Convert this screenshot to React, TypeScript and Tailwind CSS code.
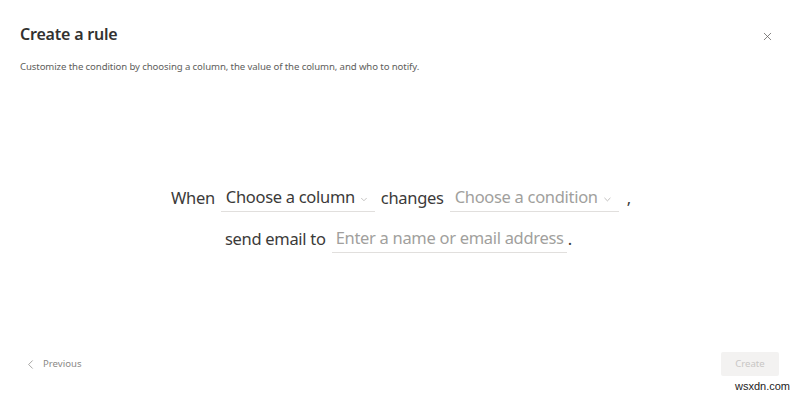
import React from 'react';
import { X, ChevronDown, ChevronLeft } from 'lucide-react';

const font = { fontFamily: '"Noto Sans", "Open Sans", sans-serif' };

const Dropdown: React.FC<{ label: string; muted?: boolean; width: string }> = ({ label, muted, width }) => (
    <div className={`flex items-center justify-between border-b border-[#e1dfdd] pl-[5px] pr-[6px] pb-[1px] whitespace-nowrap ${width}`}>
        <span className={`tracking-[-0.3px] ${muted ? 'text-[#a19f9d]' : 'text-[#3b3a39]'}`}>{label}</span>
        <ChevronDown size={11} strokeWidth={1.5} className="text-[#a19f9d] ml-1 mt-[3px]" />
    </div>
);

export default function App() {
    return (
        <div className="w-[800px] h-[396px] bg-white flex flex-col relative" style={font}>
            {/* HEADER */}
            <div className="flex items-start justify-between pl-[20px] pr-[26px] pt-[22px]">
                <div className="flex flex-col">
                    <h1 className="text-[16px] font-semibold text-[#323130] leading-[24px] tracking-[-0.2px]">Create a rule</h1>
                    <p className="text-[9.6px] text-[#605e5c] mt-[14px] tracking-[-0.1px]">
                        Customize the condition by choosing a column, the value of the column, and who to notify.
                    </p>
                </div>
                <button className="text-[#605e5c] mt-[8px]"><X size={13} strokeWidth={1.4} /></button>
            </div>

            {/* SENTENCE */}
            <div className="flex-1 flex flex-col items-center justify-center gap-[14px] text-[16.5px] text-[#3b3a39] pt-[12px] pl-[2px] whitespace-nowrap">
                <div className="flex items-center gap-[6px]">
                    <span className="tracking-[-0.3px]">When</span>
                    <Dropdown label="Choose a column" width="w-[154px]" />
                    <span className="tracking-[-0.3px]">changes</span>
                    <Dropdown label="Choose a condition" muted width="w-[169px]" />
                    <span className="ml-[2px]">,</span>
                </div>
                <div className="flex items-center gap-[6px] pr-[5px]">
                    <span className="tracking-[-0.3px]">send email to</span>
                    <div className="border-b border-[#e1dfdd] px-[4px] pb-[1px] w-[235px]">
                        <span className="text-[#a19f9d] tracking-[-0.3px]">Enter a name or email address</span>
                    </div>
                    <span className="-ml-[5px]">.</span>
                </div>
            </div>

            {/* FOOTER */}
            <div className="flex items-center justify-between pl-[23px] pr-[21px] pb-[20px]">
                <button className="flex items-center gap-[5px] text-[9.6px] text-[#8a8886]">
                    <ChevronLeft size={15} strokeWidth={1.2} />
                    Previous
                </button>
                <button className="w-[58px] h-[24px] bg-[#f3f2f1] text-[9.6px] text-[#c8c6c4] rounded-[2px]">Create</button>
            </div>

            <span className="absolute right-[10px] bottom-[2px] text-[11px] text-[#222] bg-white" style={{ fontFamily: '"Liberation Sans", sans-serif' }}>wsxdn.com</span>
        </div>
    );
}
